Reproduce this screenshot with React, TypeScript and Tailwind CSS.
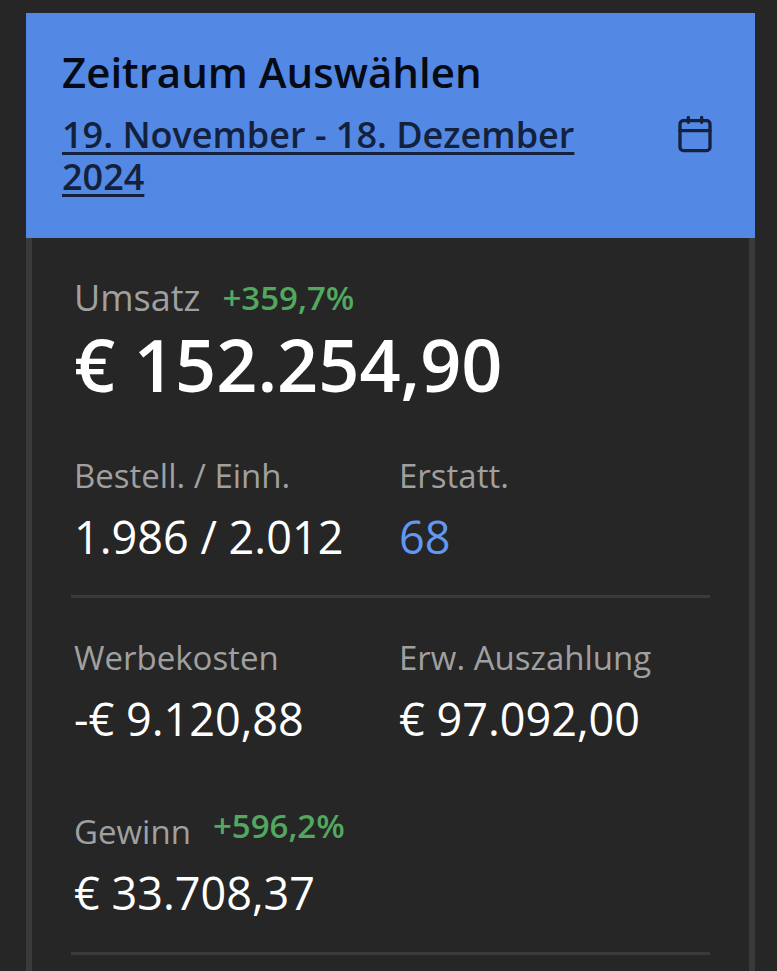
export default function App() {
  const font = { fontFamily: '"Open Sans", sans-serif' };
  return (
    <div style={font} className="h-[971px] overflow-hidden bg-[#262626] pt-[13px] pr-[22px] pl-[26px]">
      <div className="bg-[#5389e4] h-[225px] pl-[36px] pr-[40px] pt-[32px]">
        <div className="text-[42px] leading-[54px] font-semibold text-[#050a14]">Zeitraum Auswählen</div>
        <div className="flex justify-between mt-[15px]">
          <div className="w-[560px] text-[36px] leading-[42px] font-semibold text-[#14213d] underline decoration-[3px] underline-offset-4">19. November - 18. Dezember 2024</div>
          <svg width="40" height="40" viewBox="0 0 24 24" fill="none" stroke="#14213d" strokeWidth="2" strokeLinecap="round" strokeLinejoin="round">
            <path d="M8 2v3M16 2v3" />
            <rect x="3" y="4" width="18" height="18" rx="2" />
            <path d="M3 10h18" />
          </svg>
        </div>
      </div>
      <div className="border-x-[6px] border-[#3a3a3a] h-[740px] px-[39px] pt-[37px]">
        <div className="pl-[3px]">
          <div className="flex items-center gap-[22px] h-[45px]">
            <span className="text-[36px] leading-[45px] text-[#a0a0a0]">Umsatz</span>
            <span className="text-[33px] leading-[45px] font-semibold text-[#52a85f]">+359,7%</span>
          </div>
          <div className="text-[72px] leading-[88px] font-semibold text-white">€ 152.254,90</div>
        </div>
        <div className="flex mt-[46px] pb-[28px] border-b-[3px] border-[#3a3a3a] pl-[3px]">
          <div className="w-[325px]">
            <div className="text-[33px] leading-[44px] text-[#a0a0a0]">Bestell. / Einh.</div>
            <div className="text-[45px] leading-[60px] mt-[9px] text-white">1.986 / 2.012</div>
          </div>
          <div>
            <div className="text-[33px] leading-[44px] text-[#a0a0a0]">Erstatt.</div>
            <div className="text-[45px] leading-[60px] mt-[9px] text-[#6098f2]">68</div>
          </div>
        </div>
        <div className="flex mt-[38px] pl-[3px]">
          <div className="w-[325px]">
            <div className="text-[33px] leading-[44px] text-[#a0a0a0]">Werbekosten</div>
            <div className="text-[45px] leading-[60px] mt-[9px] text-white">-€ 9.120,88</div>
          </div>
          <div>
            <div className="text-[33px] leading-[44px] text-[#a0a0a0]">Erw. Auszahlung</div>
            <div className="text-[45px] leading-[60px] mt-[9px] text-white">€ 97.092,00</div>
          </div>
        </div>
        <div className="mt-[53px] pb-[29px] border-b-[3px] border-[#3a3a3a] pl-[3px]">
          <div className="flex items-start gap-[22px] h-[61px]">
            <span className="text-[33px] leading-[44px] mt-[8px] text-[#a0a0a0]">Gewinn</span>
            <span className="text-[33px] leading-[40px] mt-[4px] font-semibold text-[#52a85f]">+596,2%</span>
          </div>
          <div className="text-[45px] leading-[60px] text-white">€ 33.708,37</div>
        </div>
      </div>
    </div>
  );
}
